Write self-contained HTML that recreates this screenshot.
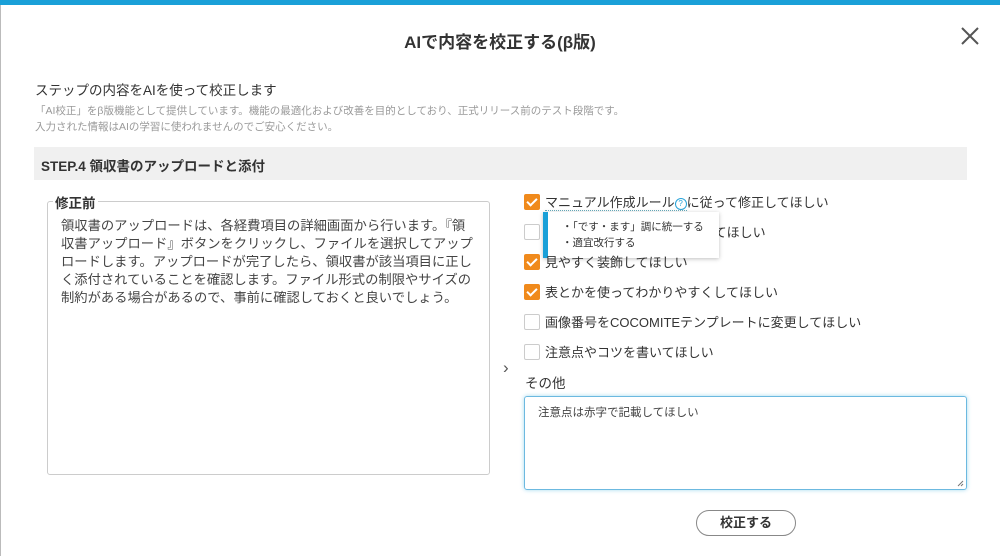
<!DOCTYPE html>
<html><head><meta charset="utf-8"><style>
body{margin:0;width:1000px;height:556px;background:#fff;position:relative;overflow:hidden;font-family:"Liberation Sans","Noto Sans CJK JP",sans-serif;color:#333}
.a{position:absolute;white-space:nowrap}
.cb{position:absolute;width:16px;height:16px;border:1px solid #ccc;border-radius:2px;box-sizing:border-box;background:#fff}
.cb.on{background:#f08a1c;border-color:#f08a1c}
.cb.on::after{content:"";position:absolute;left:4px;top:1px;width:4px;height:8px;border:solid #fff;border-width:0 2px 2px 0;transform:rotate(45deg)}
.lbl{position:absolute;left:545px;font-size:13px;color:#333;white-space:nowrap}
</style></head><body>
<div class="a" style="left:0;top:0;width:1000px;height:5px;background:#1aa0d8"></div>
<div class="a" style="left:0;top:5px;width:1px;height:551px;background:#bbb"></div>
<div class="a" style="left:0;top:28px;width:1000px;text-align:center;font-size:17px;font-weight:bold;color:#333">AIで内容を校正する(β版)</div>
<svg class="a" style="left:960px;top:26px" width="20" height="20" viewBox="0 0 20 20"><path d="M2 2L18 18M18 2L2 18" stroke="#555" stroke-width="2"/></svg>
<div class="a" style="left:35px;top:79px;font-size:13.5px">ステップの内容をAIを使って校正します</div>
<div class="a" style="left:35px;top:103px;font-size:10.5px;color:#999">「AI校正」をβ版機能として提供しています。機能の最適化および改善を目的としており、正式リリース前のテスト段階です。</div>
<div class="a" style="left:35px;top:119px;font-size:10.5px;color:#999">入力された情報はAIの学習に使われませんのでご安心ください。</div>
<div class="a" style="left:34px;top:147px;width:933px;height:33px;background:#f0f0f0"></div>
<div class="a" style="left:41px;top:155px;font-size:13.5px;font-weight:bold;color:#333">STEP.4 領収書のアップロードと添付</div>
<div class="a" style="left:47px;top:201px;width:443px;height:274px;border:1px solid #ccc;border-radius:3px;box-sizing:border-box"></div>
<div class="a" style="left:53px;top:192px;font-size:13.5px;font-weight:bold;background:#fff;padding:0 2px">修正前</div>
<div class="a" style="left:61px;top:217px;font-size:13.3px;line-height:18px;color:#444">領収書のアップロードは、各経費項目の詳細画面から行います。『領<br>収書アップロード』ボタンをクリックし、ファイルを選択してアップ<br>ロードします。アップロードが完了したら、領収書が該当項目に正し<br>く添付されていることを確認します。ファイル形式の制限やサイズの<br>制約がある場合があるので、事前に確認しておくと良いでしょう。</div>
<div class="a" style="left:503px;top:358px;font-size:17px;color:#555">›</div>
<div class="cb on" style="left:524px;top:194px"></div><div class="lbl" style="top:192px"><span style="border-bottom:1px dotted #6ab">マニュアル作成ルール<span style="display:inline-block;width:10px;height:10px;border:1px solid #29a3d8;border-radius:50%;font-size:8px;line-height:10px;text-align:center;color:#29a3d8;vertical-align:1px">?</span></span>に従って修正してほしい</div>
<div class="cb" style="left:524px;top:224px"></div><div class="lbl" style="top:222px">わかりやすい言葉で書き直してほしい</div>
<div class="a" style="left:543px;top:212px;width:176px;height:46px;background:#fff;box-shadow:0 1px 4px rgba(0,0,0,.25);border-left:5px solid #1aa0d8;box-sizing:border-box"></div>
<div class="a" style="left:562px;top:219px;font-size:10.5px;line-height:16px;color:#333">・「です・ます」調に統一する<br>・適宜改行する</div>
<div class="cb on" style="left:524px;top:254px"></div><div class="lbl" style="top:252px">見やすく装飾してほしい</div>
<div class="cb on" style="left:524px;top:284px"></div><div class="lbl" style="top:282px">表とかを使ってわかりやすくしてほしい</div>
<div class="cb" style="left:524px;top:314px"></div><div class="lbl" style="top:312px">画像番号をCOCOMITEテンプレートに変更してほしい</div>
<div class="cb" style="left:524px;top:344px"></div><div class="lbl" style="top:342px">注意点やコツを書いてほしい</div>
<div class="a" style="left:525px;top:372px;font-size:13.5px">その他</div>
<div class="a" style="left:524px;top:396px;width:443px;height:94px;border:1px solid #6cb9e0;border-radius:3px;box-sizing:border-box;box-shadow:0 0 4px rgba(26,160,216,.4)"></div>
<div class="a" style="left:538px;top:404px;font-size:11.5px;color:#444">注意点は赤字で記載してほしい</div>
<svg class="a" style="left:957px;top:480px" width="7" height="7"><path d="M1 6L6 1M4 6L6 4" stroke="#777" stroke-width="1"/></svg>
<div class="a" style="left:696px;top:510px;width:100px;height:26px;border:1px solid #888;border-radius:13px;box-sizing:border-box;text-align:center;font-size:13px;font-weight:bold;line-height:24px;color:#333">校正する</div>
</body></html>
